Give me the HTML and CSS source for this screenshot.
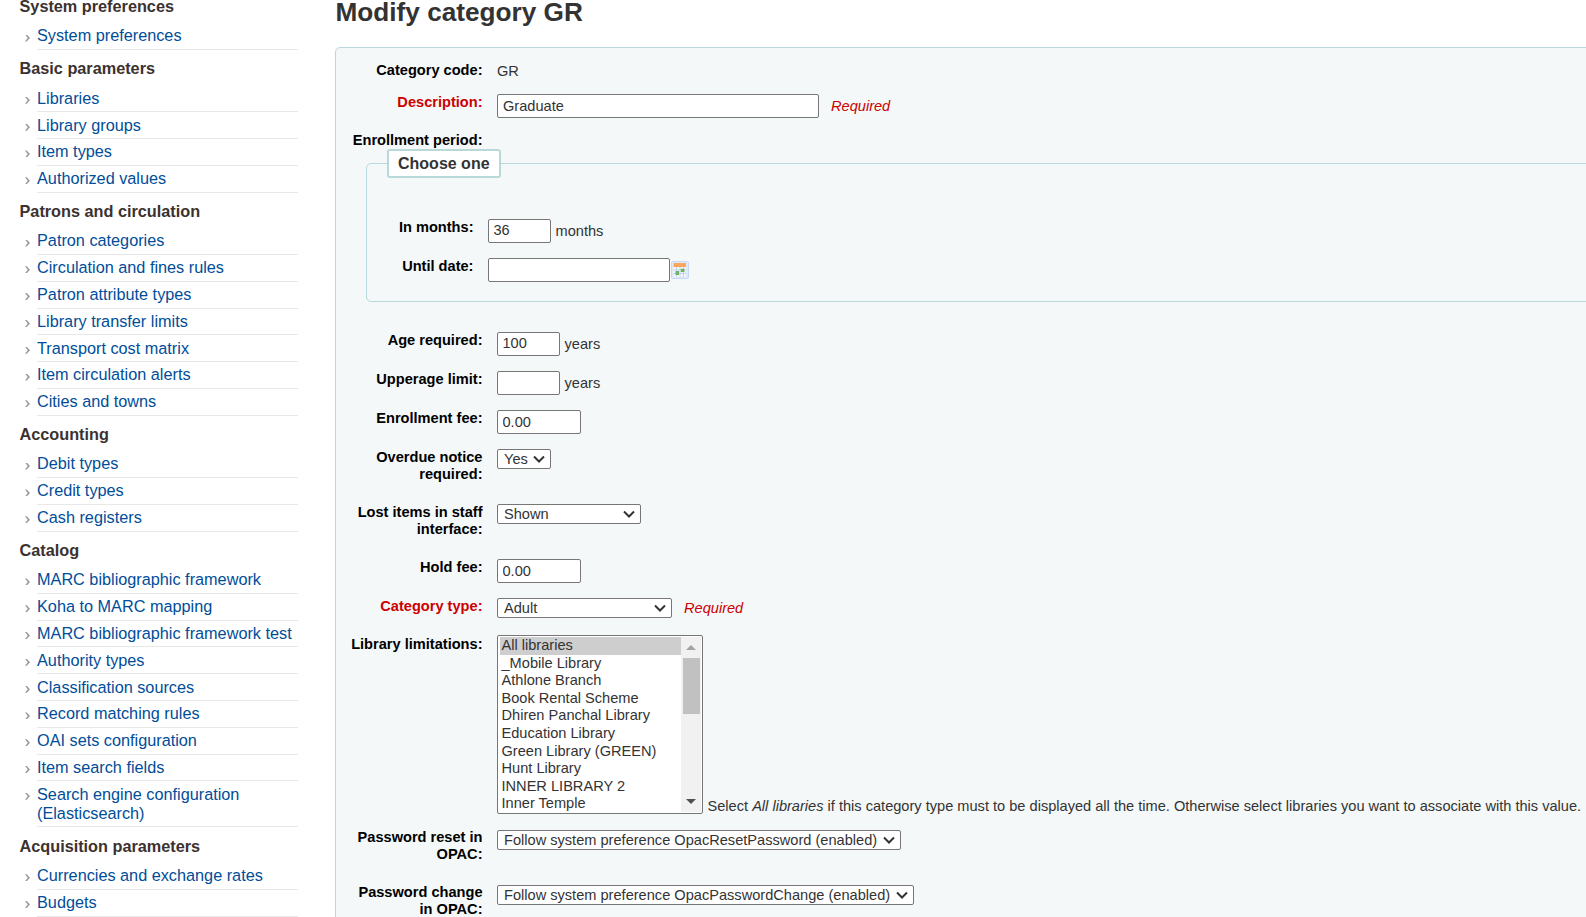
FILE: index.html
```html
<!DOCTYPE html>
<html lang="en">
<head>
<meta charset="utf-8">
<title>Modify category GR</title>
<link rel="stylesheet" href="styles.css">
</head>
<body>
<div class="page">
  <aside class="side">
    <h3>System preferences</h3>
    <ul><li><a href="#">System preferences</a></li></ul>
    <h3>Basic parameters</h3>
    <ul>
      <li><a href="#">Libraries</a></li>
      <li><a href="#">Library groups</a></li>
      <li><a href="#">Item types</a></li>
      <li><a href="#">Authorized values</a></li>
    </ul>
    <h3>Patrons and circulation</h3>
    <ul>
      <li><a href="#">Patron categories</a></li>
      <li><a href="#">Circulation and fines rules</a></li>
      <li><a href="#">Patron attribute types</a></li>
      <li><a href="#">Library transfer limits</a></li>
      <li><a href="#">Transport cost matrix</a></li>
      <li><a href="#">Item circulation alerts</a></li>
      <li><a href="#">Cities and towns</a></li>
    </ul>
    <h3>Accounting</h3>
    <ul>
      <li><a href="#">Debit types</a></li>
      <li><a href="#">Credit types</a></li>
      <li><a href="#">Cash registers</a></li>
    </ul>
    <h3>Catalog</h3>
    <ul>
      <li><a href="#">MARC bibliographic framework</a></li>
      <li><a href="#">Koha to MARC mapping</a></li>
      <li><a href="#">MARC bibliographic framework test</a></li>
      <li><a href="#">Authority types</a></li>
      <li><a href="#">Classification sources</a></li>
      <li><a href="#">Record matching rules</a></li>
      <li><a href="#">OAI sets configuration</a></li>
      <li><a href="#">Item search fields</a></li>
      <li><a href="#">Search engine configuration (Elasticsearch)</a></li>
    </ul>
    <h3>Acquisition parameters</h3>
    <ul>
      <li><a href="#">Currencies and exchange rates</a></li>
      <li><a href="#">Budgets</a></li>
    </ul>
  </aside>
  <main class="main">
    <h1>Modify category GR</h1>
    <form class="panel">
      <div class="row row-text">
        <span class="label">Category code:</span>
        <span class="value">GR</span>
      </div>
      <div class="row">
        <label class="label req">Description:</label>
        <input class="w-desc" type="text" value="Graduate">
        <em class="required">Required</em>
      </div>
      <div class="row-head"><span class="label">Enrollment period:</span></div>
      <fieldset class="choose">
        <legend>Choose one</legend>
        <div class="row inner">
          <label class="label">In months:</label>
          <input class="w-short" type="text" value="36">
          <span class="unit">months</span>
        </div>
        <div class="row inner">
          <label class="label">Until date:</label>
          <input class="w-date" type="text">
          <svg class="cal" width="18" height="18" viewBox="0 0 18 18" aria-hidden="true">
            <rect x="0.5" y="0.5" width="17" height="17" rx="1" fill="#dfe9f7" stroke="#c6d9f1"/>
            <rect x="2.500" y="2" width="12.500" height="14" fill="#f4f7fc"/>
            <rect x="2.500" y="2" width="12.500" height="4" fill="#fba45c"/>
            <path d="M2.500 9h12.500M2.500 12.500h12.500M5.500 6v10M9 6v10M12.500 6v10" stroke="#bcd2ee" stroke-width="1" fill="none"/>
            <rect x="4.500" y="10" width="3.500" height="4" fill="#6fb35e"/>
            <rect x="9.800" y="7.700" width="3.700" height="3.300" fill="#6fb35e"/>
          </svg>
        </div>
      </fieldset>
      <div class="row first-after">
        <label class="label">Age required:</label>
        <input class="w-short" type="text" value="100">
        <span class="unit">years</span>
      </div>
      <div class="row">
        <label class="label">Upperage limit:</label>
        <input class="w-short" type="text">
        <span class="unit">years</span>
      </div>
      <div class="row">
        <label class="label">Enrollment fee:</label>
        <input class="w-fee" type="text" value="0.00">
      </div>
      <div class="row">
        <label class="label">Overdue notice required:</label>
        <select class="w-yes"><option>Yes</option></select>
      </div>
      <div class="row">
        <label class="label">Lost items in staff interface:</label>
        <select class="w-lost"><option>Shown</option></select>
      </div>
      <div class="row">
        <label class="label">Hold fee:</label>
        <input class="w-fee" type="text" value="0.00">
      </div>
      <div class="row">
        <label class="label req">Category type:</label>
        <select class="w-cat"><option>Adult</option></select>
        <em class="required req-select">Required</em>
      </div>
      <div class="row row-list">
        <label class="label label-list">Library limitations:</label>
        <div class="listbox">
          <div class="opts">
            <div class="opt sel">All libraries</div>
            <div class="opt">_Mobile Library</div>
            <div class="opt">Athlone Branch</div>
            <div class="opt">Book Rental Scheme</div>
            <div class="opt">Dhiren Panchal Library</div>
            <div class="opt">Education Library</div>
            <div class="opt">Green Library (GREEN)</div>
            <div class="opt">Hunt Library</div>
            <div class="opt">INNER LIBRARY 2</div>
            <div class="opt">Inner Temple</div>
          </div>
          <div class="sb">
            <span class="arrow up"></span>
            <span class="thumb"></span>
            <span class="arrow down"></span>
          </div>
        </div>
        <span class="hint">Select <i>All libraries</i> if this category type must to be displayed all the time. Otherwise select libraries you want to associate with this value.</span>
      </div>
      <div class="row">
        <label class="label">Password reset in OPAC:</label>
        <select class="w-reset"><option>Follow system preference OpacResetPassword (enabled)</option></select>
      </div>
      <div class="row">
        <label class="label">Password change in OPAC:</label>
        <select class="w-change"><option>Follow system preference OpacPasswordChange (enabled)</option></select>
      </div>
    </form>
  </main>
</div>
</body>
</html>
```

FILE: styles.css
```css
html, body {
  margin: 0;
  height: 100%;
  overflow: hidden;
  background: #fff;
}
body {
  font-family: "Liberation Sans", Arial, sans-serif;
  color: #333;
}
.page {
  display: flex;
  margin-top: -14px;
}
.side {
  flex: 0 0 298px;
  width: 298px;
  padding: 1.700px 0 0 19.500px;
  box-sizing: border-box;
}
.side h3 {
  margin: 0;
  padding: 9.100px 0 7.400px;
  font-size: 16.250px;
  line-height: 19px;
  font-weight: bold;
  color: #3b3230;
}
.side ul {
  margin: 0;
  padding: 0;
  list-style: none;
}
.side li {
  display: flex;
  align-items: flex-start;
  padding-left: 5.500px;
}
.side li::before {
  content: "";
  flex: 0 0 5px;
  height: 7px;
  margin: 11.400px 7px 0 0;
  background: #9a9a9a;
  clip-path: polygon(0 0, 35% 0, 100% 50%, 35% 100%, 0 100%, 55% 50%);
}
.side a {
  flex: 1;
  display: block;
  padding: 3.300px 0;
  border-bottom: 1px solid #e8e8e8;
  font-size: 16.250px;
  line-height: 19.200px;
  color: #004d99;
  text-decoration: none;
}
.main {
  flex: 0 0 1400px;
  margin-left: 36.500px;
}
h1 {
  margin: 10.500px 0 20px 1px;
  font-size: 26.200px;
  line-height: 30px;
  font-weight: bold;
  color: #333;
}
.panel {
  display: block;
  box-sizing: border-box;
  padding: 14px 0 0 12px;
  background: #f4f8f9;
  border: 1px solid #b9d8d9;
  border-radius: 5px;
  font-size: 14.600px;
}
.row {
  display: flex;
  align-items: flex-start;
  padding-bottom: 15px;
  line-height: 17.500px;
}
.row-text {
  padding-bottom: 10px;
}
.row-head {
  display: flex;
  line-height: 17.500px;
  margin-top: -1.500px;
}
.label {
  flex: 0 0 135px;
  width: 135px;
  margin: 0 14px 5px 0;
  text-align: right;
  font-weight: bold;
  color: #000;
}
.label-list {
  margin-top: 1px;
}
.req {
  color: #c00;
}
.value {
  margin-left: 0.500px;
  line-height: 19px;
}
input, select {
  box-sizing: border-box;
  font-family: "Liberation Sans", Arial, sans-serif;
  font-size: 14.600px;
  color: #333;
  background-color: #fff;
  border: 1px solid #767676;
  border-radius: 2px;
}
input {
  height: 24px;
  padding: 0 5px;
  margin: 0;
}
select {
  appearance: none;
  height: 20px;
  padding: 0 20px 0 6.500px;
  margin: 0;
  background-image: url("data:image/svg+xml,%3Csvg xmlns='http://www.w3.org/2000/svg' width='12' height='8' viewBox='0 0 12 8'%3E%3Cpath d='M1 1.500L6 6.500L11 1.500' fill='none' stroke='%23333' stroke-width='2'/%3E%3C/svg%3E");
  background-repeat: no-repeat;
  background-position: right 5px center;
}
.w-desc { width: 322px; padding-left: 5.500px; }
.w-short { width: 63px; padding-bottom: 2px; }
.w-fee { width: 84px; }
.w-date { width: 182px; }
.w-yes { width: 54px; }
.w-lost { width: 144px; }
.w-cat { width: 175px; }
.w-reset { width: 404px; margin-top: 1px; }
.w-change { width: 417px; margin-top: 1px; }
.required {
  margin-left: 12.500px;
  line-height: 24px;
  color: #c00;
}
.req-select {
  line-height: 20px;
}
.unit {
  margin-left: 5px;
  line-height: 24px;
}
.choose {
  margin: -5px 0 0 18px;
  padding: 40.500px 0 4px 12px;
  min-width: 0;
  border: 1px solid #b9d8d9;
  border-radius: 5px;
}
.choose legend {
  box-sizing: border-box;
  height: 29px;
  margin-left: 8px;
  padding: 0 9.500px;
  background: #fff;
  border: 2px solid #b9d8d9;
  border-radius: 3px;
  font-size: 16px;
  font-weight: bold;
  line-height: 25px;
  color: #333;
}
.inner .label {
  flex-basis: 95px;
  width: 95px;
}
.cal {
  flex: none;
  margin: 3.500px 0 0 1.500px;
}
.first-after {
  margin-top: 30px;
}
.listbox {
  display: flex;
  flex: none;
  box-sizing: border-box;
  width: 206.500px;
  height: 178.500px;
  padding: 1px;
  background: #fff;
  border: 1px solid #767676;
  border-radius: 2px;
}
.opts {
  flex: 1;
  min-width: 0;
  padding-left: 1px;
}
.opt {
  height: 17.600px;
  padding-left: 2px;
  line-height: 16px;
  white-space: nowrap;
  color: #333;
}
.sel {
  background: #cecece;
}
.sb {
  display: flex;
  flex: 0 0 20px;
  flex-direction: column;
  align-items: center;
  background: #f1f1f1;
}
.arrow {
  flex: none;
  width: 0;
  height: 0;
  border-left: 5px solid transparent;
  border-right: 5px solid transparent;
}
.up {
  margin: 8px 0;
  border-bottom: 5px solid #a3a3a3;
}
.thumb {
  flex: 0 0 56px;
  width: 17px;
  background: #c1c1c1;
}
.down {
  margin-top: auto;
  margin-bottom: 8px;
  border-top: 5px solid #505050;
}
.hint {
  align-self: flex-end;
  margin-left: 4.500px;
  white-space: nowrap;
  line-height: 17px;
  margin-bottom: -1px;
}
```
